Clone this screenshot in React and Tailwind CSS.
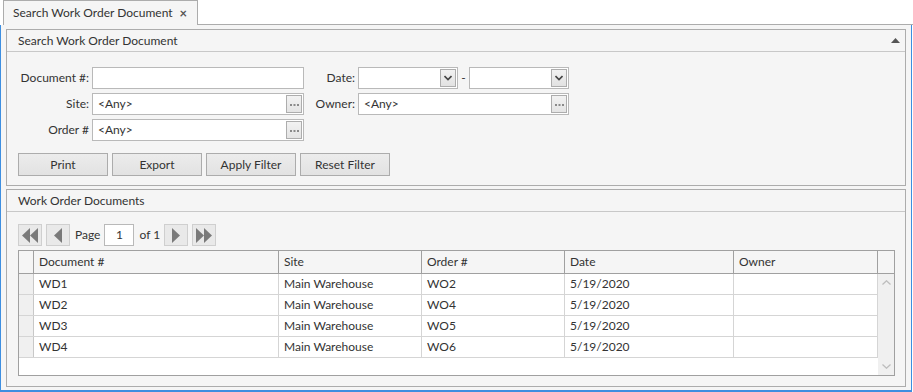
import React from "react";

const font = { fontFamily: 'Lato, "Open Sans", sans-serif' };

function EllipsisButton() {
  return (
    <div className="absolute right-[1px] top-[1px] bottom-[1px] w-[16px] border border-[#adadad] bg-gradient-to-b from-[#f2f2f2] to-[#e4e4e4] flex items-center justify-center">
      <svg width="9" height="3" viewBox="0 0 9 3">
        <rect x="0" y="1" width="2" height="2" fill="#8a8a8a" />
        <rect x="3.5" y="1" width="2" height="2" fill="#8a8a8a" />
        <rect x="7" y="1" width="2" height="2" fill="#8a8a8a" />
      </svg>
    </div>
  );
}

function LookupBox({ value, width }) {
  return (
    <div
      className={`relative h-[22px] border border-[#b9b9b9] bg-white flex items-center pl-[5px] ${width}`}
    >
      <span className="text-[#333]">{value}</span>
      <EllipsisButton />
    </div>
  );
}

function ComboBox() {
  return (
    <div className="relative h-[22px] w-[100px] border border-[#b9b9b9] bg-white">
      <div className="absolute right-[1px] top-[1px] bottom-[1px] w-[16px] border border-[#adadad] bg-gradient-to-b from-[#f2f2f2] to-[#e2e2e2] flex items-center justify-center">
        <svg width="8" height="6" viewBox="0 0 8 6">
          <path d="M0.5 1 L4 4.5 L7.5 1" stroke="#444" strokeWidth="1.6" fill="none" />
        </svg>
      </div>
    </div>
  );
}

function Button({ children }) {
  return (
    <div className="w-[90px] h-[23px] border border-[#acacac] bg-gradient-to-b from-[#ececec] to-[#e2e2e2] flex items-center justify-center text-[#333]">
      {children}
    </div>
  );
}

function PagerButton({ dir, double }) {
  const tri = (x) =>
    dir === "left" ? (
      <path d={`M${x + 8} 0 L${x} 7.5 L${x + 8} 15 Z`} fill="#7a7a7a" />
    ) : (
      <path d={`M${x} 0 L${x + 8} 7.5 L${x} 15 Z`} fill="#7a7a7a" />
    );
  return (
    <div className="w-[24px] h-[22px] border border-[#cfcfcf] bg-[#e9e9e9] flex items-center justify-center">
      <svg width={double ? 16 : 8} height="15" viewBox={double ? "0 0 16 15" : "0 0 8 15"}>
        {double ? (
          <>
            {tri(0)}
            {tri(8)}
          </>
        ) : (
          tri(0)
        )}
      </svg>
    </div>
  );
}

function PanelHeader({ title, collapse }) {
  return (
    <div className="h-[22px] border-b border-[#c8c8c8] flex items-center justify-between pl-[11px] pr-[5px]">
      <span className="text-[#333]">{title}</span>
      {collapse && (
        <svg width="9" height="5" viewBox="0 0 9 5">
          <path d="M0 5 L4.5 0 L9 5 Z" fill="#555" />
        </svg>
      )}
    </div>
  );
}

const cols = [
  { name: "Document #", w: "w-[245px]", key: "doc" },
  { name: "Site", w: "w-[143px]", key: "site" },
  { name: "Order #", w: "w-[143px]", key: "order" },
  { name: "Date", w: "w-[169px]", key: "date" },
  { name: "Owner", w: "w-[144px]", key: "owner" },
];

const rows = [
  { doc: "WD1", site: "Main Warehouse", order: "WO2", date: "5/19/2020", owner: "" },
  { doc: "WD2", site: "Main Warehouse", order: "WO4", date: "5/19/2020", owner: "" },
  { doc: "WD3", site: "Main Warehouse", order: "WO5", date: "5/19/2020", owner: "" },
  { doc: "WD4", site: "Main Warehouse", order: "WO6", date: "5/19/2020", owner: "" },
];

export default function App() {
  return (
    <div className="w-[913px] h-[392px] bg-white flex flex-col text-[12px] leading-[16px] text-[#333]" style={font}>
      {/* TAB STRIP */}
      <div className="h-[25px] flex items-end pl-[3px]">
        <div className="h-[25px] w-[195px] border border-b-0 border-[#acacac] bg-[#f5f5f5] flex items-center pl-[9px] pr-[10px] justify-between whitespace-nowrap">
          <span>Search Work Order Document</span>
          <span className="text-[13px] font-bold text-[#555] leading-none">×</span>
        </div>
        <div className="flex-1 border-b border-[#acacac]" />
      </div>

      {/* FRAME */}
      <div className="w-[912px] h-[367px] border-l border-r border-b-2 border-[#3d8ee0] bg-[#f5f5f5] px-[5px] pt-[4px] pb-[3px] flex flex-col gap-[3px]">
        {/* SEARCH PANEL */}
        <div className="h-[158px] border border-[#acacac] bg-[#f5f5f5] flex flex-col">
          <PanelHeader title="Search Work Order Document" collapse />
          <div className="pl-[11px] pt-[15px]">
            <div className="grid grid-cols-[71px_212px_48px_212px] gap-x-[3px] gap-y-[4px] items-center whitespace-nowrap">
              <div className="text-right">Document #:</div>
              <div className="h-[22px] border border-[#b9b9b9] bg-white" />
              <div className="text-right">Date:</div>
              <div className="flex items-center">
                <ComboBox />
                <span className="w-[11px] text-center">-</span>
                <ComboBox />
              </div>

              <div className="text-right">Site:</div>
              <LookupBox value="<Any>" width="w-[212px]" />
              <div className="text-right">Owner:</div>
              <LookupBox value="<Any>" width="w-[211px]" />

              <div className="text-right">Order #</div>
              <LookupBox value="<Any>" width="w-[212px]" />
              <div />
              <div />
            </div>

            <div className="flex gap-[4px] mt-[12px]">
              <Button>Print</Button>
              <Button>Export</Button>
              <Button>Apply Filter</Button>
              <Button>Reset Filter</Button>
            </div>
          </div>
        </div>

        {/* RESULTS PANEL */}
        <div className="flex-1 border border-[#acacac] bg-[#f5f5f5] flex flex-col">
          <PanelHeader title="Work Order Documents" />
          <div className="pl-[11px] pr-[10px] pt-[12px] pb-[10px] flex flex-col gap-[4px]">
            {/* PAGER */}
            <div className="flex items-center h-[22px]">
              <PagerButton dir="left" double />
              <div className="w-[4px]" />
              <PagerButton dir="left" />
              <span className="ml-[5px]">Page</span>
              <div className="ml-[4px] w-[30px] h-[22px] border border-[#b9b9b9] bg-white flex items-center justify-center">1</div>
              <span className="ml-[5px]">of 1</span>
              <div className="w-[4px]" />
              <PagerButton dir="right" />
              <div className="w-[4px]" />
              <PagerButton dir="right" double />
            </div>

            {/* GRID */}
            <div className="border border-[#a0a0a0] bg-white flex flex-col h-[126px]">
              <div className="flex h-[23px] border-b border-[#a0a0a0] bg-[#f5f5f5]">
                <div className="w-[15px] border-r border-[#a0a0a0]" />
                {cols.map((c) => (
                  <div key={c.key} className={`${c.w} border-r border-[#a0a0a0] pl-[5px] flex items-center`}>
                    {c.name}
                  </div>
                ))}
                <div className="flex-1" />
              </div>
              <div className="flex flex-1">
                <div className="flex flex-col">
                  {rows.map((r) => (
                    <div key={r.doc} className="flex h-[21px] border-b border-[#d5d5d5]">
                      <div className="w-[15px] border-r border-[#c8c8c8] bg-[#f0f0f0]" />
                      {cols.map((c) => (
                        <div key={c.key} className={`${c.w} border-r border-[#d5d5d5] pl-[5px] flex items-center`}>
                          {r[c.key]}
                        </div>
                      ))}
                    </div>
                  ))}
                </div>
                <div className="flex-1 bg-[#f0f0f0] flex flex-col items-center justify-between py-[6px]">
                  <svg width="9" height="5" viewBox="0 0 9 5">
                    <path d="M0.5 4.5 L4.5 0.8 L8.5 4.5" stroke="#bdbdbd" strokeWidth="1.3" fill="none" />
                  </svg>
                  <svg width="9" height="5" viewBox="0 0 9 5">
                    <path d="M0.5 0.5 L4.5 4.2 L8.5 0.5" stroke="#bdbdbd" strokeWidth="1.3" fill="none" />
                  </svg>
                </div>
              </div>
            </div>
          </div>
        </div>
      </div>
    </div>
  );
}
